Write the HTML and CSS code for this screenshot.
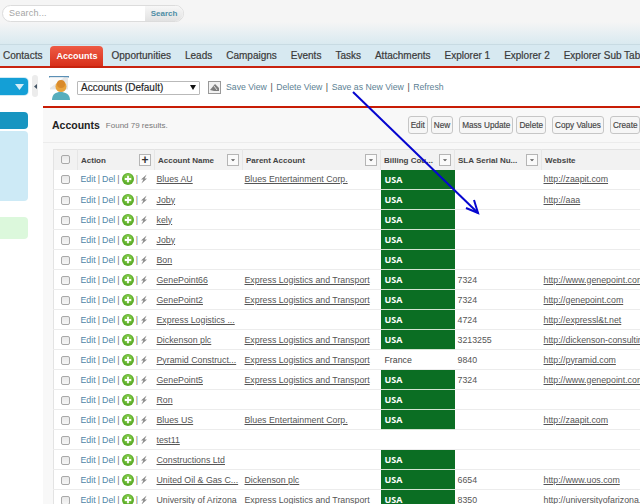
FILE: index.html
```html
<!DOCTYPE html>
<html lang="en">
<head>
<meta charset="utf-8">
<title>Accounts</title>
<link rel="stylesheet" href="styles.css">
</head>
<body>
<svg class="defs" width="0" height="0">
  <symbol id="plus" viewBox="0 0 12 12"><circle cx="6" cy="6" r="6" fill="#5fae2c"/><circle cx="6" cy="5" r="4.300" fill="#7cc544"/><path d="M6 2.800v6.400M2.800 6h6.400" stroke="#fff" stroke-width="1.800"/></symbol>
  <symbol id="bolt" viewBox="0 0 8 10"><path d="M6.600.6 1 5.400h2.400L1.400 9.600 7 4.400H4.600z" fill="#8a8a8a"/></symbol>
  <symbol id="caret" viewBox="0 0 12 12"><path d="M3.500 5h5L6 7.500z" fill="#555"/></symbol>
</svg>
<div class="page">
  <header class="top">
    <form class="search">
      <span class="search-input">Search...</span>
      <span class="search-btn">Search</span>
    </form>
  </header>
  <nav class="tabs">
    <span class="tab">Contacts</span>
    <span class="tab active">Accounts</span>
    <span class="tab">Opportunities</span>
    <span class="tab">Leads</span>
    <span class="tab">Campaigns</span>
    <span class="tab">Events</span>
    <span class="tab">Tasks</span>
    <span class="tab">Attachments</span>
    <span class="tab">Explorer 1</span>
    <span class="tab">Explorer 2</span>
    <span class="tab">Explorer Sub Tab</span>
  </nav>
  <div class="body">
    <aside class="side">
      <div class="side-col">
        <div class="side-select"><svg width="9" height="6" viewBox="0 0 9 6"><path d="M0 0h9L4.500 6z" fill="#d5eef8"/></svg></div>
        <div class="side-head"></div>
        <div class="side-panel"></div>
        <div class="side-green"></div>
      </div>
      <div class="side-handle"><svg width="3" height="5" viewBox="0 0 3 5"><path d="M3 0v5L0 2.500z" fill="#456"/></svg></div>
    </aside>
    <main class="main">
      <div class="viewbar">
        <svg class="view-icon" width="22" height="25" viewBox="0 0 22 25">
          <rect x="0" y="1" width="20" height="1.500" fill="#5a8fb5"/>
          <path d="M1 2.500h18v12H1z" fill="#e6e6e6"/>
          <path d="M1 2.500h14L1 13z" fill="#fafafa"/>
          <path d="M3 25c0-6 4-8 8.500-8S21 19 21 25z" fill="#58aebd"/>
          <circle cx="12" cy="11.500" r="5.500" fill="#e8a33d"/>
          <circle cx="12" cy="9" r="4" fill="#d98a2b"/>
        </svg>
        <div class="view-select"><span>Accounts (Default)</span><svg width="6" height="5" viewBox="0 0 6 5"><path d="M0 0h6L3 5z" fill="#111"/></svg></div>
        <svg class="filter-icon" width="13" height="13" viewBox="0 0 13 13">
          <rect x=".5" y=".5" width="12" height="12" fill="#f2f2f2" stroke="#999"/>
          <path d="M2 9 7 3l4 4v3H6z" fill="#7d7d7d"/>
          <path d="M6 5l3 4" stroke="#ddd"/>
        </svg>
        <div class="view-links">
          <a>Save View</a><i>|</i><a>Delete View</a><i>|</i><a>Save as New View</a><i>|</i><a>Refresh</a>
        </div>
      </div>
      <section class="panel">
        <div class="panel-head">
          <h1>Accounts</h1>
          <span class="found">Found 79 results.</span>
          <div class="actions">
            <span class="btn">Edit</span>
            <span class="btn">New</span>
            <span class="btn gap">Mass Update</span>
            <span class="btn">Delete</span>
            <span class="btn gap">Copy Values</span>
            <span class="btn gap">Create</span>
          </div>
        </div>
        <div class="table-wrap">
          <table>
            <colgroup>
              <col class="c-check"><col class="c-action"><col class="c-name"><col class="c-parent"><col class="c-country"><col class="c-sla"><col class="c-web">
            </colgroup>
            <thead>
              <tr>
                <th><span class="cb"></span></th>
                <th><div class="th"><span>Action</span><span class="hbtn plus-btn">+</span></div></th>
                <th><div class="th"><span>Account Name</span><svg class="hbtn"><use href="#caret"/></svg></div></th>
                <th><div class="th"><span>Parent Account</span><svg class="hbtn"><use href="#caret"/></svg></div></th>
                <th><div class="th"><span>Billing Cou...</span><svg class="hbtn"><use href="#caret"/></svg></div></th>
                <th><div class="th"><span>SLA Serial Nu...</span><svg class="hbtn"><use href="#caret"/></svg></div></th>
                <th><div class="th"><span>Website</span></div></th>
              </tr>
            </thead>
            <tbody>
              <tr><td><span class="cb"></span></td><td class="act">Edit <i>|</i> Del <i>|</i> <svg class="ic-plus"><use href="#plus"/></svg> <i>|</i> <svg class="ic-bolt"><use href="#bolt"/></svg></td><td><u>Blues AU</u></td><td><u>Blues Entertainment Corp.</u></td><td class="usa">USA</td><td></td><td><u>http://zaapit.com</u></td></tr>
              <tr><td><span class="cb"></span></td><td class="act">Edit <i>|</i> Del <i>|</i> <svg class="ic-plus"><use href="#plus"/></svg> <i>|</i> <svg class="ic-bolt"><use href="#bolt"/></svg></td><td><u>Joby</u></td><td></td><td class="usa">USA</td><td></td><td><u>http://aaa</u></td></tr>
              <tr><td><span class="cb"></span></td><td class="act">Edit <i>|</i> Del <i>|</i> <svg class="ic-plus"><use href="#plus"/></svg> <i>|</i> <svg class="ic-bolt"><use href="#bolt"/></svg></td><td><u>kely</u></td><td></td><td class="usa">USA</td><td></td><td></td></tr>
              <tr><td><span class="cb"></span></td><td class="act">Edit <i>|</i> Del <i>|</i> <svg class="ic-plus"><use href="#plus"/></svg> <i>|</i> <svg class="ic-bolt"><use href="#bolt"/></svg></td><td><u>Joby</u></td><td></td><td class="usa">USA</td><td></td><td></td></tr>
              <tr><td><span class="cb"></span></td><td class="act">Edit <i>|</i> Del <i>|</i> <svg class="ic-plus"><use href="#plus"/></svg> <i>|</i> <svg class="ic-bolt"><use href="#bolt"/></svg></td><td><u>Bon</u></td><td></td><td class="usa">USA</td><td></td><td></td></tr>
              <tr><td><span class="cb"></span></td><td class="act">Edit <i>|</i> Del <i>|</i> <svg class="ic-plus"><use href="#plus"/></svg> <i>|</i> <svg class="ic-bolt"><use href="#bolt"/></svg></td><td><u>GenePoint66</u></td><td><u>Express Logistics and Transport</u></td><td class="usa">USA</td><td>7324</td><td><u>http://www.genepoint.com</u></td></tr>
              <tr><td><span class="cb"></span></td><td class="act">Edit <i>|</i> Del <i>|</i> <svg class="ic-plus"><use href="#plus"/></svg> <i>|</i> <svg class="ic-bolt"><use href="#bolt"/></svg></td><td><u>GenePoint2</u></td><td><u>Express Logistics and Transport</u></td><td class="usa">USA</td><td>7324</td><td><u>http://genepoint.com</u></td></tr>
              <tr><td><span class="cb"></span></td><td class="act">Edit <i>|</i> Del <i>|</i> <svg class="ic-plus"><use href="#plus"/></svg> <i>|</i> <svg class="ic-bolt"><use href="#bolt"/></svg></td><td><u>Express Logistics ...</u></td><td></td><td class="usa">USA</td><td>4724</td><td><u>http://expressl&amp;t.net</u></td></tr>
              <tr><td><span class="cb"></span></td><td class="act">Edit <i>|</i> Del <i>|</i> <svg class="ic-plus"><use href="#plus"/></svg> <i>|</i> <svg class="ic-bolt"><use href="#bolt"/></svg></td><td><u>Dickenson plc</u></td><td><u>Express Logistics and Transport</u></td><td class="usa">USA</td><td>3213255</td><td><u>http://dickenson-consulting.com</u></td></tr>
              <tr><td><span class="cb"></span></td><td class="act">Edit <i>|</i> Del <i>|</i> <svg class="ic-plus"><use href="#plus"/></svg> <i>|</i> <svg class="ic-bolt"><use href="#bolt"/></svg></td><td><u>Pyramid Construct...</u></td><td><u>Express Logistics and Transport</u></td><td class="other">France</td><td>9840</td><td><u>http://pyramid.com</u></td></tr>
              <tr><td><span class="cb"></span></td><td class="act">Edit <i>|</i> Del <i>|</i> <svg class="ic-plus"><use href="#plus"/></svg> <i>|</i> <svg class="ic-bolt"><use href="#bolt"/></svg></td><td><u>GenePoint5</u></td><td><u>Express Logistics and Transport</u></td><td class="usa">USA</td><td>7324</td><td><u>http://www.genepoint.com</u></td></tr>
              <tr><td><span class="cb"></span></td><td class="act">Edit <i>|</i> Del <i>|</i> <svg class="ic-plus"><use href="#plus"/></svg> <i>|</i> <svg class="ic-bolt"><use href="#bolt"/></svg></td><td><u>Ron</u></td><td></td><td class="usa">USA</td><td></td><td></td></tr>
              <tr><td><span class="cb"></span></td><td class="act">Edit <i>|</i> Del <i>|</i> <svg class="ic-plus"><use href="#plus"/></svg> <i>|</i> <svg class="ic-bolt"><use href="#bolt"/></svg></td><td><u>Blues US</u></td><td><u>Blues Entertainment Corp.</u></td><td class="usa">USA</td><td></td><td><u>http://zaapit.com</u></td></tr>
              <tr><td><span class="cb"></span></td><td class="act">Edit <i>|</i> Del <i>|</i> <svg class="ic-plus"><use href="#plus"/></svg> <i>|</i> <svg class="ic-bolt"><use href="#bolt"/></svg></td><td><u>test11</u></td><td></td><td></td><td></td><td></td></tr>
              <tr><td><span class="cb"></span></td><td class="act">Edit <i>|</i> Del <i>|</i> <svg class="ic-plus"><use href="#plus"/></svg> <i>|</i> <svg class="ic-bolt"><use href="#bolt"/></svg></td><td><u>Constructions Ltd</u></td><td></td><td class="usa">USA</td><td></td><td></td></tr>
              <tr><td><span class="cb"></span></td><td class="act">Edit <i>|</i> Del <i>|</i> <svg class="ic-plus"><use href="#plus"/></svg> <i>|</i> <svg class="ic-bolt"><use href="#bolt"/></svg></td><td><u>United Oil &amp; Gas C...</u></td><td><u>Dickenson plc</u></td><td class="usa">USA</td><td>6654</td><td><u>http://www.uos.com</u></td></tr>
              <tr><td><span class="cb"></span></td><td class="act">Edit <i>|</i> Del <i>|</i> <svg class="ic-plus"><use href="#plus"/></svg> <i>|</i> <svg class="ic-bolt"><use href="#bolt"/></svg></td><td><u>University of Arizona</u></td><td><u>Express Logistics and Transport</u></td><td class="usa">USA</td><td>8350</td><td><u>http://universityofarizona.com</u></td></tr>
            </tbody>
          </table>
        </div>
      </section>
    </main>
  </div>
  <svg class="arrow" width="640" height="504" viewBox="0 0 640 504">
    <path d="M353 92 478 213" stroke="#0606cf" stroke-width="2" fill="none"/>
    <path d="M466 208 478 213 474 200" stroke="#0606cf" stroke-width="2" fill="none"/>
  </svg>
</div>
</body>
</html>
```
FILE: styles.css
```css
* { box-sizing: border-box; }
html, body { margin: 0; padding: 0; }
body { width: 640px; height: 504px; overflow: hidden; font-family: "Liberation Sans", Arial, sans-serif; background: #fff; }
.defs { position: absolute; }
.page { position: relative; width: 640px; height: 504px; overflow: hidden; display: flex; flex-direction: column; }

.top { height: 45px; flex: none; padding: 5px 0 0 2px; background: linear-gradient(#f5f5f5 0, #f5f5f5 22px, #d8e9f0 45px); border-bottom: 1px solid #c8dbe3; }
.search { display: flex; width: 182px; height: 17px; border: 1px solid #dcdcdc; border-radius: 9px; overflow: hidden; background: #fff; margin: 0; }
.search-input { flex: 1; font-size: 9px; line-height: 15px; padding-left: 6px; color: #a5a5a5; letter-spacing: .2px; }
.search-btn { width: 38px; font-size: 8px; font-weight: bold; line-height: 15px; text-align: center; color: #4f8da5; background: linear-gradient(#f7f7f7, #e2e2e2); }

.tabs { height: 21px; flex: none; display: flex; align-items: stretch; gap: 14px; padding: 0 0 0 3px; background: #d7e9f1; font-size: 10px; color: #3a3a3a; border-bottom: 2px solid #c8230f; white-space: nowrap; box-sizing: content-box; }
.tab { display: flex; align-items: center; -webkit-text-stroke: .2px #3a3a3a; }
.tab.active { margin: 1px -6px 0 -6px; padding: 0 6px; border-radius: 4px 4px 0 0; background: linear-gradient(#ee5b45, #d8301b); color: #fff; font-weight: bold; font-size: 9px; -webkit-text-stroke: 0; }

.body { flex: 1; min-height: 0; display: flex; }

.side { width: 43px; flex: none; display: flex; background: #fff; }
.side-col { width: 28px; flex: none; padding-top: 10px; }
.side-select { height: 17px; display: flex; align-items: center; justify-content: flex-end; padding-right: 4px; background: #149fd6; border-radius: 0 4px 4px 0; box-shadow: 0 0 0 1px #cfeaf5; }
.side-head { height: 17px; margin-top: 17px; background: #1795c1; border-radius: 0 4px 4px 0; }
.side-panel { height: 70px; margin-top: 2px; background: #cdeaf6; border-radius: 0 4px 4px 0; }
.side-green { height: 22px; margin-top: 16px; background: #dcf8dc; border-radius: 0 4px 4px 0; }
.side-handle { width: 6px; height: 22px; margin: 7px 0 0 4px; display: flex; align-items: center; justify-content: center; background: #ececec; border-radius: 3px; }

.main { flex: 1; min-width: 0; display: flex; flex-direction: column; }
.viewbar { height: 38px; flex: none; display: flex; align-items: center; padding-left: 6px; background: #fff; }
.view-icon { flex: none; margin-right: 6px; }
.view-select { width: 123px; height: 14px; display: flex; align-items: center; justify-content: space-between; padding: 0 3px; margin-top: 1px; border: 1px solid #b9b9b9; border-radius: 1px; font-size: 10px; color: #222; -webkit-text-stroke: .15px #222; }
.filter-icon { flex: none; margin: 0 5px 0 8px; }
.view-links { display: flex; gap: 3.500px; color: #5c7f93; white-space: nowrap; font-size: 8.700px; }
.view-links i { font-style: normal; color: #444; }

.panel { flex: 1; min-height: 0; background: #f8f8f8; border-top: 2px solid #c81c05; overflow: hidden; padding-left: 10px; }
.panel-head { height: 35px; display: flex; align-items: center; margin: 0 0 6px -10px; padding-left: 9px; border-bottom: 1px solid #ececec; white-space: nowrap; }
.panel-head h1 { margin: 0; flex: none; font-size: 10.500px; font-weight: bold; color: #222; }
.found { margin-left: 6px; flex: none; font-size: 8px; color: #777; }
.actions { display: flex; gap: 3px; margin-left: 240px; flex: none; }
.btn { height: 18px; padding: 0 2px; display: flex; align-items: center; background: #f6f6f6; border: 1px solid #c6c6c6; border-radius: 3px; font-size: 8.200px; color: #444; white-space: nowrap; -webkit-text-stroke: .15px #444; flex: none; }
.btn.gap { margin-left: 3px; }

.table-wrap { width: 640px; }
table { table-layout: fixed; width: 600px; border-collapse: collapse; background: #fff; font-size: 8.800px; color: #555; border-left: 1px solid #e3e3e3; border-top: 1px solid #e3e3e3; }
.c-check { width: 24px; } .c-action { width: 77px; } .c-name { width: 88px; } .c-parent { width: 138px; } .c-country { width: 74px; } .c-sla { width: 87px; } .c-web { width: 112px; }
thead tr { height: 20px; background: #f2f2f2; }
th { padding: 1px 0 0 3px; text-align: left; font-weight: bold; font-size: 8px; color: #444; border-right: 1px solid #e6e6e6; overflow: hidden; }
th:first-child { padding: 0; text-align: center; }
.th { display: flex; align-items: center; justify-content: space-between; padding-right: 3px; white-space: nowrap; }
.hbtn { width: 12px; height: 12px; flex: none; background: #fafafa; border: 1px solid #b5b5b5; }
.plus-btn { display: flex; align-items: center; justify-content: center; font-size: 12px; line-height: 10px; color: #333; }
tbody tr { height: 20px; border-bottom: 1px solid #ececec; }
td { padding: 0 0 0 2px; white-space: nowrap; overflow: hidden; }
td:first-child { padding: 0; text-align: center; }
td:nth-child(6) { padding-left: 3px; }
.cb { display: inline-block; width: 9px; height: 9px; vertical-align: middle; background: linear-gradient(#e8e8e8, #f6f6f6); border: 1px solid #a9a9a9; border-radius: 2px; }
u { color: #555; }
td.act { padding-left: 3px; color: #4f86a8; word-spacing: -.4px; }
.act i { font-style: normal; color: #777; }
.ic-plus { width: 12px; height: 12px; vertical-align: -3px; }
.ic-bolt { width: 8px; height: 10px; vertical-align: -2px; }
td.usa { padding-left: 4px; background: #0b6e23; color: #fff; font-family: "Open Sans", "Liberation Sans", sans-serif; font-weight: bold; font-size: 9px; border-bottom: 1px solid #d5e5d5; }
td.other { padding-left: 4px; color: #444; }

.arrow { position: absolute; left: 0; top: 0; pointer-events: none; }
```
